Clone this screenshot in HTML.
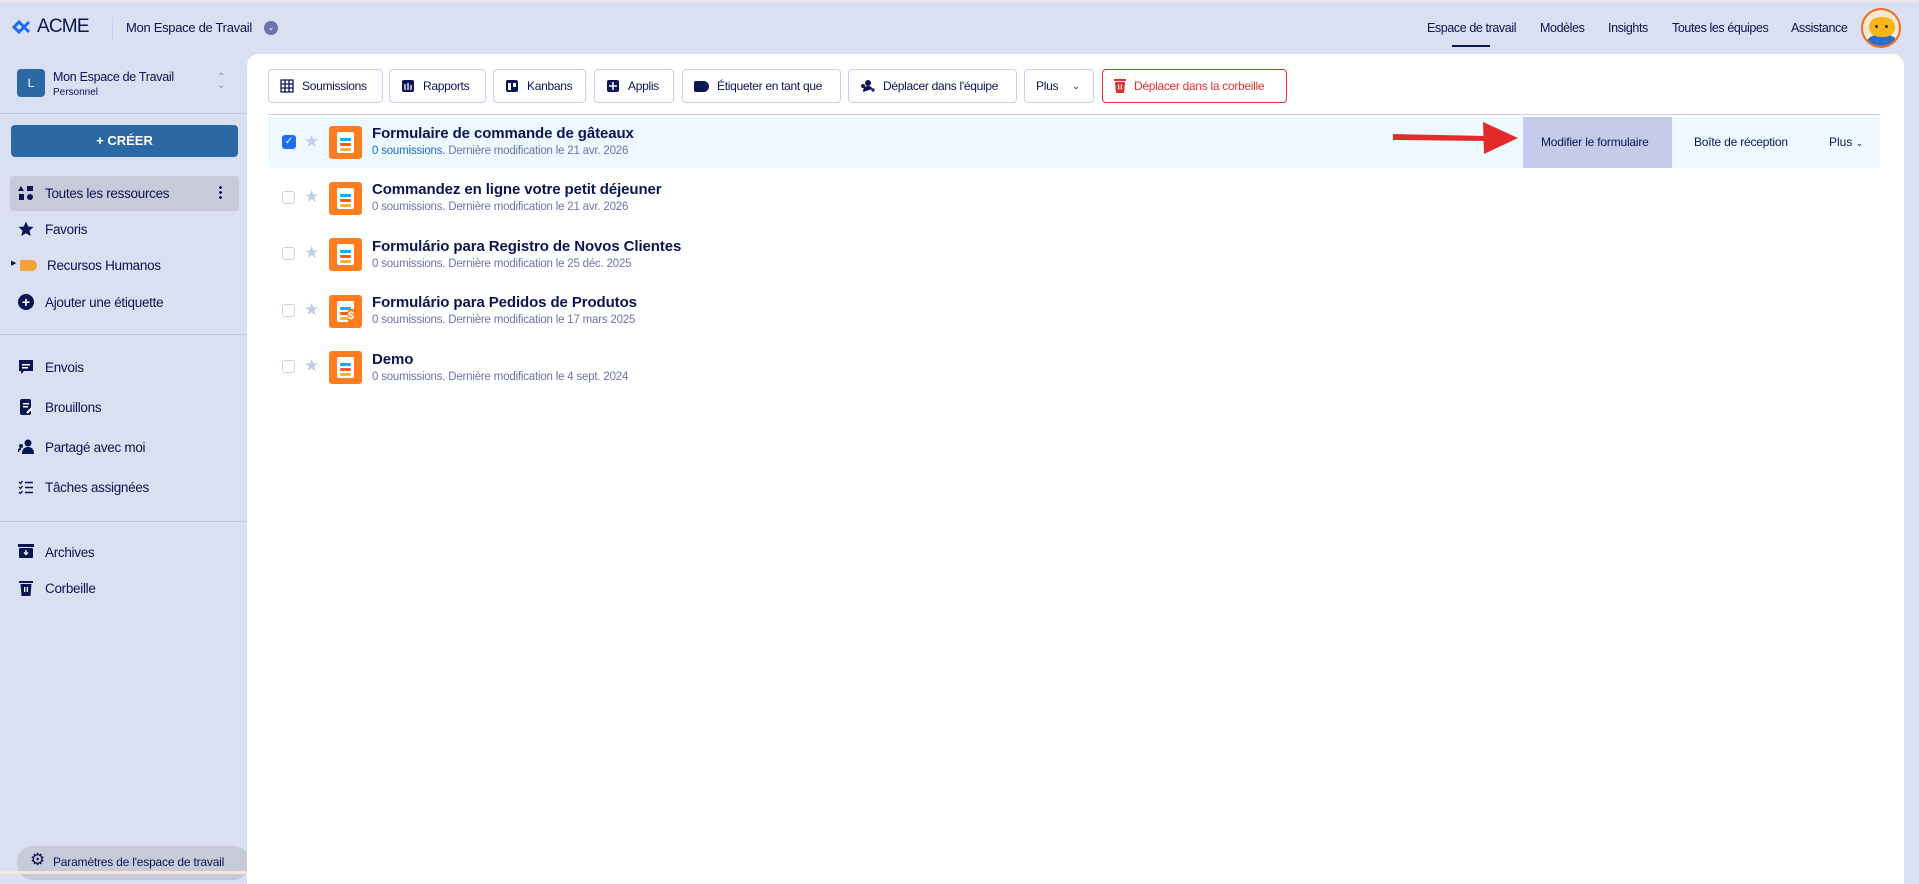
<!DOCTYPE html>
<html><head><meta charset="utf-8"><style>
*{box-sizing:border-box;margin:0;padding:0}
body{width:1919px;height:874px;overflow:hidden;background:#dadff2;font-family:"Liberation Sans",sans-serif;color:#0a1551;position:relative}
.a{position:absolute}
.nav{font-size:12.5px;top:21px;color:#0a1551;letter-spacing:-0.4px}
.side{font-size:13.5px;left:45px;color:#0a1551;letter-spacing:-0.3px}
.si{left:18px;width:16px;height:16px}
.btn{position:absolute;top:69px;height:34px;border:1px solid #c8ceed;border-radius:4px;background:#fff;font-size:12px;display:flex;align-items:center;padding-left:11px;gap:8px;color:#0a1551;letter-spacing:-0.3px}
.row .cb{position:absolute;left:282px;width:13px;height:13px;border:1.5px solid #c8ceed;border-radius:3px;background:#fff}
.ttl{position:absolute;left:372px;font-size:15px;font-weight:bold;color:#0a1551;letter-spacing:-0.1px}
.sub{position:absolute;left:372px;font-size:11.5px;color:#6c73a8;letter-spacing:-0.2px}
.fi{position:absolute;left:329px;width:33px;height:33px;background:#ff7d1f;border-radius:3px}
.fi i{position:absolute;left:8px;top:6px;width:17px;height:21px;background:#fff;border-radius:2px}
.fi b{position:absolute;left:11px;width:11px;height:3px;border-radius:1px}
</style></head><body>
<div class="a" style="left:0;top:0;width:1919px;height:2px;background:#efe6e8"></div>
<svg class="a" style="left:12px;top:19px" width="22" height="16" viewBox="0 0 22 16"><path d="M2 8 L7 3 L12 8 L7 13 Z" fill="none" stroke="#1e6df5" stroke-width="3"/><path d="M12 8 L17 3 M12 8 L17 13" stroke="#1e6df5" stroke-width="3"/></svg>
<div class="a" style="left:37px;top:16px;font-size:19px;color:#0a1551;letter-spacing:-0.8px">ACME</div>
<div class="a" style="left:112px;top:18px;width:1px;height:22px;background:#c8ceed"></div>
<div class="a" style="left:126px;top:20px;font-size:13px;color:#0a1551;letter-spacing:-0.3px">Mon Espace de Travail</div>
<div class="a" style="left:264px;top:21px;width:14px;height:14px;border-radius:50%;background:#6c73a8;color:#fff;font-size:8px;text-align:center;line-height:14px">⌄</div>
<div class="a nav" style="left:1427px">Espace de travail</div>
<div class="a" style="left:1452px;top:45px;width:38px;height:2px;background:#0a1551"></div>
<div class="a nav" style="left:1540px">Modèles</div>
<div class="a nav" style="left:1608px">Insights</div>
<div class="a nav" style="left:1672px">Toutes les équipes</div>
<div class="a nav" style="left:1791px">Assistance</div>
<div class="a" style="left:1861px;top:8px;width:40px;height:40px;border-radius:50%;border:2px solid #f26b1d;background:#f4e9d2;overflow:hidden">
 <div class="a" style="left:4px;top:24px;width:30px;height:16px;border-radius:50% 50% 0 0;background:#2b6fc5"></div>
 <div class="a" style="left:6px;top:7px;width:26px;height:20px;border-radius:45%;background:#f9b51c"></div>
 <div class="a" style="left:12px;top:15px;width:3px;height:3px;border-radius:50%;background:#333"></div>
 <div class="a" style="left:22px;top:15px;width:3px;height:3px;border-radius:50%;background:#333"></div>
</div>
<div class="a" style="left:17px;top:69px;width:28px;height:28px;border-radius:4px;background:#2c68a3;color:#fff;font-size:12px;text-align:center;line-height:28px">L</div>
<div class="a" style="left:53px;top:70px;font-size:12.5px;color:#0a1551;letter-spacing:-0.3px">Mon Espace de Travail</div>
<div class="a" style="left:53px;top:87px;font-size:10px;color:#0a1551">Personnel</div>
<div class="a" style="left:217px;top:74px;font-size:10px;color:#8a90b8;line-height:8px">⌃<br>⌄</div>
<div class="a" style="left:0;top:113px;width:247px;height:1px;background:#c3c8df"></div>
<div class="a" style="left:11px;top:125px;width:227px;height:32px;border-radius:4px;background:#2c68a3;color:#fff;font-size:13px;font-weight:bold;text-align:center;line-height:32px">+ CRÉER</div>
<div class="a" style="left:10px;top:176px;width:229px;height:35px;border-radius:4px;background:#c7cbd9"></div>
<svg class="a si" style="top:185px" viewBox="0 0 16 16"><path d="M3 1 L6 6 L0 6Z" fill="#0a1551"/><rect x="9" y="1" width="6" height="5" fill="#0a1551"/><rect x="1" y="9" width="5" height="6" fill="#0a1551"/><circle cx="12" cy="12" r="3" fill="#0a1551"/></svg>
<div class="a side" style="top:186px">Toutes les ressources</div>
<div class="a" style="left:219px;top:185px;width:3px;height:14px;background:radial-gradient(circle,#0a1551 1.3px,transparent 1.5px) 0 0/3px 5px"></div>
<svg class="a si" style="top:221px" viewBox="0 0 16 16"><path d="M8 0.5 L10.2 5.5 L15.5 6 L11.5 9.6 L12.7 15 L8 12.2 L3.3 15 L4.5 9.6 L0.5 6 L5.8 5.5Z" fill="#0a1551"/></svg>
<div class="a side" style="top:222px">Favoris</div>
<div class="a" style="left:11px;top:259px;font-size:7px;color:#0a1551">▶</div>
<div class="a" style="left:20px;top:260px;width:17px;height:11px;background:#f4a23a;border-radius:2px 6px 6px 2px"></div>
<div class="a side" style="left:47px;top:258px">Recursos Humanos</div>
<div class="a" style="left:18px;top:294px;width:16px;height:16px;border-radius:50%;background:#0a1551;color:#fff;font-size:14px;font-weight:bold;text-align:center;line-height:16px">+</div>
<div class="a side" style="top:295px">Ajouter une étiquette</div>
<div class="a" style="left:0;top:334px;width:247px;height:1px;background:#c3c8df"></div>
<svg class="a si" style="top:359px" viewBox="0 0 16 16"><path d="M1 1 H15 V12 H6 L3 15 V12 H1Z" fill="#0a1551"/><rect x="4" y="5" width="8" height="1.5" fill="#fff"/><rect x="4" y="8" width="6" height="1.5" fill="#fff"/></svg>
<div class="a side" style="top:360px">Envois</div>
<svg class="a si" style="top:399px" viewBox="0 0 16 16"><rect x="2" y="0" width="11" height="16" rx="2" fill="#0a1551"/><rect x="5" y="4" width="6" height="1.5" fill="#fff"/><rect x="5" y="7" width="5" height="1.5" fill="#fff"/><path d="M9 14 L14 9" stroke="#fff" stroke-width="2"/></svg>
<div class="a side" style="top:400px">Brouillons</div>
<svg class="a si" style="top:439px" viewBox="0 0 16 16"><circle cx="10" cy="4" r="3.5" fill="#0a1551"/><path d="M4 15 Q4 8 10 8 Q16 8 16 15Z" fill="#0a1551"/><circle cx="3" cy="7" r="2" fill="#0a1551"/><path d="M0 13 Q0 10 3 10" stroke="#0a1551" stroke-width="2" fill="none"/></svg>
<div class="a side" style="top:440px">Partagé avec moi</div>
<svg class="a si" style="top:479px" viewBox="0 0 16 16"><path d="M1 3 L2.5 4.5 L4.5 2 M1 8 L2.5 9.5 L4.5 7 M1 13 L2.5 14.5 L4.5 12" stroke="#0a1551" stroke-width="1.3" fill="none"/><path d="M7 3.5H15 M7 8.5H15 M7 13.5H15" stroke="#0a1551" stroke-width="1.5"/></svg>
<div class="a side" style="top:480px">Tâches assignées</div>
<div class="a" style="left:0;top:521px;width:247px;height:1px;background:#c3c8df"></div>
<svg class="a si" style="top:543px" viewBox="0 0 16 16"><rect x="0" y="1" width="16" height="3" fill="#0a1551"/><rect x="1" y="5" width="14" height="10" rx="1" fill="#0a1551"/><path d="M8 7 V11 M6 9.5 L8 11.5 L10 9.5" stroke="#fff" stroke-width="1.3" fill="none"/></svg>
<div class="a side" style="top:545px">Archives</div>
<svg class="a si" style="top:580px" viewBox="0 0 16 16"><rect x="1" y="1" width="14" height="2" fill="#0a1551"/><path d="M2.5 4 H13.5 L12.5 16 H3.5Z" fill="#0a1551"/><rect x="6" y="7" width="1.3" height="5" fill="#fff"/><rect x="8.7" y="7" width="1.3" height="5" fill="#fff"/></svg>
<div class="a side" style="top:581px">Corbeille</div>
<div class="a" style="left:17px;top:846px;width:233px;height:34px;border-radius:16px;background:#c7cbd9"></div>
<div class="a" style="left:30px;top:850px;font-size:17px;color:#0a1551">⚙</div>
<div class="a" style="left:53px;top:855px;font-size:12px;color:#0a1551;letter-spacing:-0.2px">Paramètres de l'espace de travail</div>
<div class="a" style="left:0;top:871px;width:347px;height:3px;background:#f5e6e1"></div>
<div class="a" style="left:247px;top:54px;width:1657px;height:830px;background:#fff;border-radius:12px 12px 0 0"></div>
<div class="btn" style="left:268px;width:115px"><svg width="14" height="14" viewBox="0 0 14 14"><path d="M1 1H13V13H1Z M1 5H13 M1 9H13 M5 1V13 M9 1V13" stroke="#0a1551" stroke-width="1.3" fill="none"/></svg>Soumissions</div>
<div class="btn" style="left:389px;width:97px"><svg width="14" height="14" viewBox="0 0 14 14"><rect x="1" y="1" width="12" height="12" rx="2" fill="#0a1551"/><path d="M4 5V11 M7 4V11 M10 6V11" stroke="#fff" stroke-width="1.3"/></svg>Rapports</div>
<div class="btn" style="left:493px;width:93px"><svg width="14" height="14" viewBox="0 0 14 14"><rect x="1" y="1" width="12" height="12" rx="2" fill="#0a1551"/><rect x="3" y="4" width="3" height="7" fill="#fff"/><rect x="8" y="4" width="3" height="4" fill="#fff"/></svg>Kanbans</div>
<div class="btn" style="left:594px;width:80px"><svg width="14" height="14" viewBox="0 0 14 14"><rect x="1" y="1" width="12" height="12" rx="2" fill="#0a1551"/><path d="M7 3V11 M3 7H11" stroke="#fff" stroke-width="1.5"/></svg>Applis</div>
<div class="btn" style="left:682px;width:159px"><span style="display:inline-block;width:15px;height:11px;background:#0a1551;border-radius:2px 6px 6px 2px"></span>Étiqueter en tant que</div>
<div class="btn" style="left:848px;width:169px"><svg width="15" height="14" viewBox="0 0 15 14"><circle cx="8" cy="4" r="3" fill="#0a1551"/><path d="M3 13Q3 7 8 7Q12 7 12 10" fill="#0a1551"/><circle cx="3" cy="7" r="2" fill="#0a1551"/><path d="M11 11H15 M13 9V13" stroke="#0a1551" stroke-width="1.3"/></svg>Déplacer dans l'équipe</div>
<div class="btn" style="left:1024px;width:70px;gap:14px">Plus <span style="font-size:9px">⌄</span></div>
<div class="btn" style="left:1102px;width:185px;border-color:#e03131;color:#e03131"><svg width="12" height="14" viewBox="0 0 12 14"><rect x="0" y="0" width="12" height="2" fill="#e03131"/><path d="M1 3H11L10 14H2Z" fill="#e03131"/><rect x="4" y="5.5" width="1.2" height="5" fill="#fff"/><rect x="6.8" y="5.5" width="1.2" height="5" fill="#fff"/></svg>Déplacer dans la corbeille</div>
<div class="a" style="left:268px;top:114px;width:1612px;height:1px;background:#c8ceed"></div>
<div class="a" style="left:268px;top:117px;width:1612px;height:51px;background:#edf8ff;border-radius:0 0 4px 4px"></div>
<div class="a" style="left:1523px;top:117px;width:149px;height:51px;background:#c5cbea"></div>
<div class="a" style="left:1541px;top:135px;font-size:12px;color:#0a1551;letter-spacing:-0.2px">Modifier le formulaire</div>
<div class="a" style="left:1694px;top:135px;font-size:12px;color:#0a1551;letter-spacing:-0.2px">Boîte de réception</div>
<div class="a" style="left:1829px;top:135px;font-size:12px;color:#0a1551">Plus <span style="font-size:9px">⌄</span></div>
<svg class="a" style="left:1390px;top:120px" width="132" height="36" viewBox="0 0 132 36"><path d="M3 14 L96 16 L96 21 L3 20Z" fill="#e32b2b"/><path d="M93 2 L128 18 L94 34Z" fill="#e32b2b"/></svg>
<div class="a" style="left:282px;top:135px;width:14px;height:14px;border-radius:3px;background:#1e6df5;color:#fff;font-size:10px;text-align:center;line-height:14px">✓</div>
<div class="row">
 <div class="cb" style="top:191px"></div><div class="cb" style="top:247px"></div><div class="cb" style="top:304px"></div><div class="cb" style="top:360px"></div>
</div>
<div class="a" style="left:304px;top:132px;font-size:17px;color:#c5cbea">★</div>
<div class="a" style="left:304px;top:187px;font-size:17px;color:#c5cbea">★</div>
<div class="a" style="left:304px;top:243px;font-size:17px;color:#c5cbea">★</div>
<div class="a" style="left:304px;top:300px;font-size:17px;color:#c5cbea">★</div>
<div class="a" style="left:304px;top:356px;font-size:17px;color:#c5cbea">★</div>
<div class="fi" style="top:126px"><i></i><b style="top:12px;background:#21a4ff"></b><b style="top:17px;background:#ff5b1f"></b><b style="top:22px;background:#ffb629"></b></div>
<div class="fi" style="top:182px"><i></i><b style="top:12px;background:#21a4ff"></b><b style="top:17px;background:#ff5b1f"></b><b style="top:22px;background:#ffb629"></b></div>
<div class="fi" style="top:238px"><i></i><b style="top:12px;background:#21a4ff"></b><b style="top:17px;background:#ff5b1f"></b><b style="top:22px;background:#ffb629"></b></div>
<div class="fi" style="top:295px"><i></i><b style="top:12px;background:#21a4ff"></b><b style="top:17px;background:#ff5b1f"></b><b style="top:22px;background:#ffb629"></b><span class="a" style="left:19px;top:14px;width:10px;height:14px;background:#ff7d1f;color:#fff;font-size:11px;font-weight:bold;line-height:14px">$</span></div>
<div class="fi" style="top:351px"><i></i><b style="top:12px;background:#21a4ff"></b><b style="top:17px;background:#ff5b1f"></b><b style="top:22px;background:#ffb629"></b></div>
<div class="ttl" style="top:125px">Formulaire de commande de gâteaux</div>
<div class="sub" style="top:145px"><span style="color:#1e6ec8">0 soumissions.</span> Dernière modification le 21 avr. 2026</div>
<div class="ttl" style="top:181px">Commandez en ligne votre petit déjeuner</div>
<div class="sub" style="top:201px">0 soumissions. Dernière modification le 21 avr. 2026</div>
<div class="ttl" style="top:238px">Formulário para Registro de Novos Clientes</div>
<div class="sub" style="top:258px">0 soumissions. Dernière modification le 25 déc. 2025</div>
<div class="ttl" style="top:294px">Formulário para Pedidos de Produtos</div>
<div class="sub" style="top:314px">0 soumissions. Dernière modification le 17 mars 2025</div>
<div class="ttl" style="top:351px">Demo</div>
<div class="sub" style="top:371px">0 soumissions. Dernière modification le 4 sept. 2024</div>
</body></html>
